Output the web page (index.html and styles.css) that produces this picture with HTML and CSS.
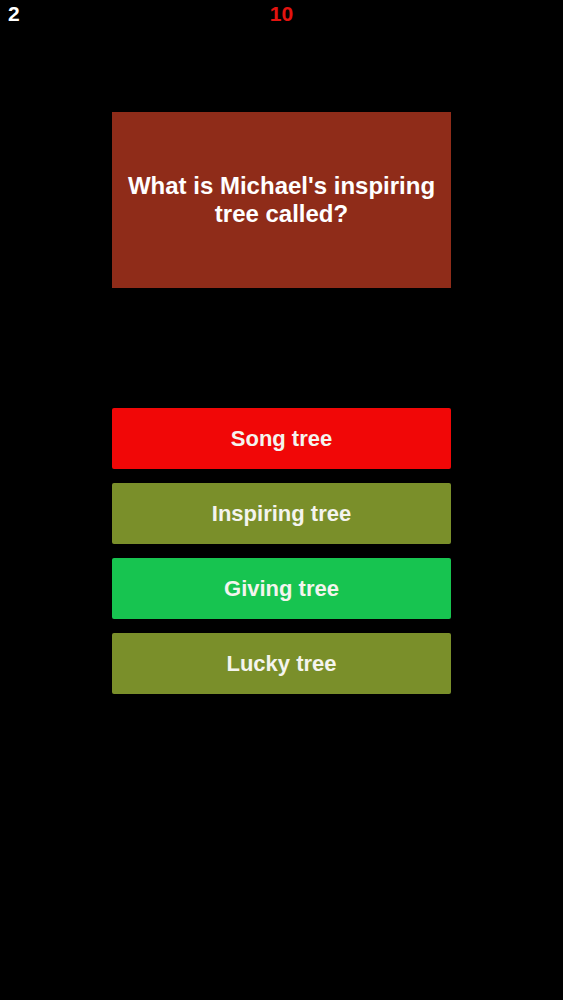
FILE: index.html
```html
<!DOCTYPE html>
<html lang="en">
<head>
    <meta charset="UTF-8">
    <meta name="viewport" content="width=device-width, initial-scale=1.0">
    <title>Trivia</title>
    <link rel="stylesheet" href="styles.css">
</head>
<body>
    <div class="game">
        <header class="topbar">
            <div class="score">2</div>
            <div class="timer">10</div>
            <div></div>
        </header>

        <div class="question">
            <p>What is Michael's inspiring tree called?</p>
        </div>

        <div class="answers">
            <button class="answer wrong">Song tree</button>
            <button class="answer">Inspiring tree</button>
            <button class="answer right">Giving tree</button>
            <button class="answer">Lucky tree</button>
        </div>
    </div>
</body>
</html>
```

FILE: styles.css
```css
* {
    margin: 0;
    padding: 0;
    box-sizing: border-box;
    font-family: "Liberation Sans", Arial, sans-serif;
}
body {
    background: #000;
    color: white;
    min-height: 100vh;
}
.game {
    display: flex;
    flex-direction: column;
    align-items: center;
}
.topbar {
    width: 100%;
    display: grid;
    grid-template-columns: 1fr auto 1fr;
    padding: 3px 8px 0;
    font-size: 21px;
    font-weight: bold;
    line-height: 22px;
}
.score {
    color: #fff;
}
.timer {
    color: #e3130f;
}
.question {
    margin-top: 87px;
    width: 339px;
    height: 176px;
    background: #8f2c19;
    display: flex;
    align-items: center;
    justify-content: center;
    padding: 0 8px;
    text-align: center;
    font-size: 24px;
    font-weight: bold;
    line-height: 28px;
}
.answers {
    margin-top: 120px;
    width: 339px;
    display: flex;
    flex-direction: column;
    gap: 14px;
}
.answer {
    height: 61px;
    border: none;
    border-radius: 2px;
    background: #7a8f2a;
    color: #f4f4ee;
    font-size: 22px;
    font-weight: bold;
}
.answer.wrong {
    background: #f10707;
}
.answer.right {
    background: #17c450;
}
```
